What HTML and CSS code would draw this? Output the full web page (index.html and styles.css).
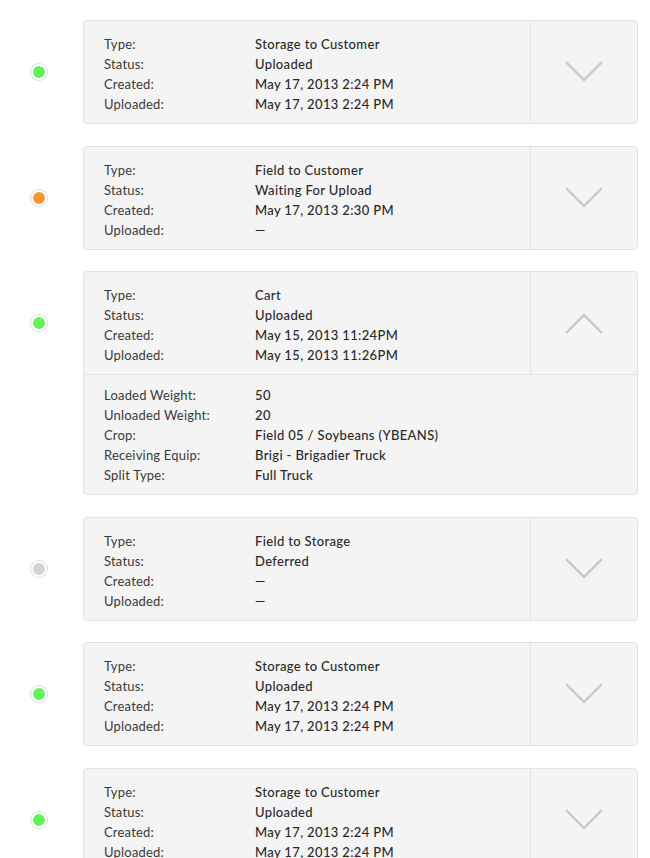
FILE: index.html
```html
<!DOCTYPE html>
<html>
<head>
<meta charset="utf-8">
<link rel="stylesheet" href="styles.css">
</head>
<body>
<div class="list">
  <div class="item">
    <div class="dot-col"><span class="dot green"></span></div>
    <div class="card">
      <div class="summary">
        <div class="rows">
          <div class="row"><span class="label">Type:</span><span class="value">Storage to Customer</span></div>
          <div class="row"><span class="label">Status:</span><span class="value">Uploaded</span></div>
          <div class="row"><span class="label">Created:</span><span class="value">May 17, 2013 2:24 PM</span></div>
          <div class="row"><span class="label">Uploaded:</span><span class="value">May 17, 2013 2:24 PM</span></div>
        </div>
        <div class="toggle"><svg width="38" height="22" viewBox="0 0 38 22"><polyline points="2,2 19,19 36,2" class="chev"/></svg></div>
      </div>
    </div>
  </div>

  <div class="item">
    <div class="dot-col"><span class="dot orange"></span></div>
    <div class="card">
      <div class="summary">
        <div class="rows">
          <div class="row"><span class="label">Type:</span><span class="value">Field to Customer</span></div>
          <div class="row"><span class="label">Status:</span><span class="value">Waiting For Upload</span></div>
          <div class="row"><span class="label">Created:</span><span class="value">May 17, 2013 2:30 PM</span></div>
          <div class="row"><span class="label">Uploaded:</span><span class="value">—</span></div>
        </div>
        <div class="toggle"><svg width="38" height="22" viewBox="0 0 38 22"><polyline points="2,2 19,19 36,2" class="chev"/></svg></div>
      </div>
    </div>
  </div>

  <div class="item">
    <div class="dot-col"><span class="dot green"></span></div>
    <div class="card">
      <div class="summary">
        <div class="rows">
          <div class="row"><span class="label">Type:</span><span class="value">Cart</span></div>
          <div class="row"><span class="label">Status:</span><span class="value">Uploaded</span></div>
          <div class="row"><span class="label">Created:</span><span class="value">May 15, 2013 11:24PM</span></div>
          <div class="row"><span class="label">Uploaded:</span><span class="value">May 15, 2013 11:26PM</span></div>
        </div>
        <div class="toggle"><svg width="38" height="22" viewBox="0 0 38 22"><polyline points="2,20 19,3 36,20" class="chev"/></svg></div>
      </div>
      <div class="details">
        <div class="row"><span class="label">Loaded Weight:</span><span class="value">50</span></div>
        <div class="row"><span class="label">Unloaded Weight:</span><span class="value">20</span></div>
        <div class="row"><span class="label">Crop:</span><span class="value">Field 05 / Soybeans (YBEANS)</span></div>
        <div class="row"><span class="label">Receiving Equip:</span><span class="value">Brigi - Brigadier Truck</span></div>
        <div class="row"><span class="label">Split Type:</span><span class="value">Full Truck</span></div>
      </div>
    </div>
  </div>

  <div class="item">
    <div class="dot-col"><span class="dot grey"></span></div>
    <div class="card">
      <div class="summary">
        <div class="rows">
          <div class="row"><span class="label">Type:</span><span class="value">Field to Storage</span></div>
          <div class="row"><span class="label">Status:</span><span class="value">Deferred</span></div>
          <div class="row"><span class="label">Created:</span><span class="value">—</span></div>
          <div class="row"><span class="label">Uploaded:</span><span class="value">—</span></div>
        </div>
        <div class="toggle"><svg width="38" height="22" viewBox="0 0 38 22"><polyline points="2,2 19,19 36,2" class="chev"/></svg></div>
      </div>
    </div>
  </div>

  <div class="item">
    <div class="dot-col"><span class="dot green"></span></div>
    <div class="card">
      <div class="summary">
        <div class="rows">
          <div class="row"><span class="label">Type:</span><span class="value">Storage to Customer</span></div>
          <div class="row"><span class="label">Status:</span><span class="value">Uploaded</span></div>
          <div class="row"><span class="label">Created:</span><span class="value">May 17, 2013 2:24 PM</span></div>
          <div class="row"><span class="label">Uploaded:</span><span class="value">May 17, 2013 2:24 PM</span></div>
        </div>
        <div class="toggle"><svg width="38" height="22" viewBox="0 0 38 22"><polyline points="2,2 19,19 36,2" class="chev"/></svg></div>
      </div>
    </div>
  </div>

  <div class="item">
    <div class="dot-col"><span class="dot green"></span></div>
    <div class="card">
      <div class="summary">
        <div class="rows">
          <div class="row"><span class="label">Type:</span><span class="value">Storage to Customer</span></div>
          <div class="row"><span class="label">Status:</span><span class="value">Uploaded</span></div>
          <div class="row"><span class="label">Created:</span><span class="value">May 17, 2013 2:24 PM</span></div>
          <div class="row"><span class="label">Uploaded:</span><span class="value">May 17, 2013 2:24 PM</span></div>
        </div>
        <div class="toggle"><svg width="38" height="22" viewBox="0 0 38 22"><polyline points="2,2 19,19 36,2" class="chev"/></svg></div>
      </div>
    </div>
  </div>
</div>
</body>
</html>
```

FILE: styles.css
```css
html, body {
  margin: 0;
  padding: 0;
  background: #ffffff;
}
body {
  font-family: Lato, "Open Sans", "Liberation Sans", sans-serif;
  font-size: 13px;
  color: #333;
  height: 858px;
  overflow: hidden;
}
.list {
  display: flex;
  flex-direction: column;
  gap: 21.5px;
  padding-top: 20px;
}
.item {
  display: flex;
  align-items: flex-start;
}
.dot-col {
  width: 83px;
  flex: none;
  display: flex;
  justify-content: flex-start;
  padding-top: 44px;
}
.dot {
  display: block;
  width: 12px;
  height: 12px;
  margin-left: 31px;
  border-radius: 50%;
  border: 2px solid #fff;
  box-shadow: 0 0 0 1px #dcdcdc;
}
.dot.green { background: #62f25a; }
.dot.orange { background: #f9952f; }
.dot.grey { background: #d3d3d3; }
.card {
  width: 553px;
  background: #f4f4f4;
  border: 1px solid #e2e2e2;
  border-radius: 4px;
}
.summary {
  display: flex;
  height: 102px;
}
.rows {
  flex: 1;
  padding: 13px 0 9px 20px;
}
.row {
  display: flex;
  line-height: 20px;
  height: 20px;
}
.label {
  width: 151px;
  flex: none;
  color: #3a3a3a;
  letter-spacing: 0.2px;
}
.value {
  color: #2a2a2a;
  font-weight: 500;
  letter-spacing: 0.35px;
}
.toggle {
  width: 106px;
  flex: none;
  border-left: 1px solid #e2e2e2;
  display: flex;
  align-items: center;
  justify-content: center;
}
.chev {
  fill: none;
  stroke: #c8c8c8;
  stroke-width: 2.4;
  stroke-linecap: square;
}
.details {
  border-top: 1px solid #e2e2e2;
  padding: 10px 0 9px 20px;
}
```
